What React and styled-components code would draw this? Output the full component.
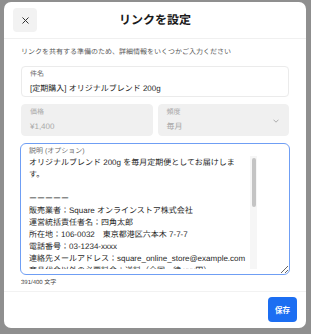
import React from "react";
import styled, { createGlobalStyle } from "styled-components";

const Global = createGlobalStyle`
  html, body { margin: 0; padding: 0; }
  body {
    background: #8f8f8f;
    font-family: "Liberation Sans", "Noto Sans CJK JP", sans-serif;
    text-rendering: geometricPrecision;
    overflow: hidden;
  }
  * { box-sizing: border-box; }
`;

const Page = styled.div`
  width: 311px;
  height: 334px;
  padding: 2px 5px 6px 4px;
  display: flex;
`;

const Modal = styled.div`
  flex: 1;
  background: #fff;
  border-radius: 7px;
  display: flex;
  flex-direction: column;
  overflow: hidden;
`;

const Header = styled.div`
  height: 37px;
  flex: none;
  display: grid;
  grid-template-columns: 24px 1fr 24px;
  align-items: center;
  padding: 0 9px;
  border-bottom: 1px solid #f0f0f0;
`;

const CloseButton = styled.button`
  width: 24px;
  height: 24px;
  border: none;
  border-radius: 4px;
  background: #f2f2f2;
  display: flex;
  align-items: center;
  justify-content: center;
  padding: 0;
`;

const Title = styled.h1`
  margin: 0;
  text-align: center;
  font-size: 12px;
  font-weight: 700;
  color: #1a1a1a;
  line-height: 16px;
`;

const Body = styled.div`
  flex: 1;
  padding: 9px 17px 4px;
  display: flex;
  flex-direction: column;
`;

const Description = styled.p`
  margin: 0;
  font-size: 7px;
  line-height: 10px;
  color: #555;
`;

const Field = styled.div`
  height: ${(p) => p.$h || 31}px;
  border: 1px solid ${(p) => (p.$disabled ? "#f0f0f0" : "#ebebeb")};
  background: ${(p) => (p.$disabled ? "#f0f0f0" : "#fff")};
  border-radius: 4px;
  padding: 3px 8px 0;
  position: relative;
  display: flex;
  flex-direction: column;
`;

const FieldLabel = styled.div`
  font-size: 7px;
  line-height: 10px;
  color: ${(p) => (p.$disabled ? "#a8a8a8" : "#6b6b6b")};
`;

const FieldValue = styled.div`
  margin-top: 3px;
  font-size: 8px;
  line-height: 12px;
  color: ${(p) => (p.$disabled ? "#a8a8a8" : "#1f1f1f")};
`;

const FirstField = styled(Field)`
  margin-top: 8px;
`;

const Row = styled.div`
  margin-top: 7px;
  display: grid;
  grid-template-columns: 1fr 1fr;
  gap: 5px;
`;

const Chevron = styled.svg`
  position: absolute;
  right: 9px;
  top: 14px;
`;

const TextBox = styled.div`
  margin: 7px -1px 0;
  height: 132px;
  border: 1.5px solid #6f9ef4;
  border-radius: 6px;
  padding: 3px 0 0 8px;
  display: flex;
  flex-direction: column;
  resize: vertical;
  overflow: hidden;
`;

const TextRow = styled.div`
  display: flex;
  align-items: flex-start;
  gap: 1px;
`;

const TextArea = styled.textarea`
  flex: none;
  width: 220px;
  height: 112px;
  border: none;
  outline: none;
  resize: none;
  padding: 0 2px 0 0;
  margin: 0;
  font-family: "Liberation Sans", "Noto Sans CJK JP", sans-serif;
  text-rendering: geometricPrecision;
  font-size: 8px;
  line-height: 12px;
  color: #1f1f1f;
  background: transparent;
  overflow: hidden;
`;

const ScrollTrack = styled.div`
  flex: none;
  margin-top: -1px;
  width: 7px;
  height: 113px;
  background: #f6f6f6;
  padding: 2px 1.5px;
`;

const ScrollThumb = styled.div`
  height: 49px;
  border-radius: 2px;
  background: #c4c4c4;
`;

const Counter = styled.div`
  margin-top: 4px;
  font-size: 6px;
  line-height: 8px;
  color: #444;
`;

const Footer = styled.div`
  flex: none;
  border-top: 1px solid #f2f2f2;
  padding: 5px 9px 6px;
  display: flex;
  justify-content: flex-end;
`;

const SaveButton = styled.button`
  width: 29px;
  height: 25px;
  border: none;
  border-radius: 4px;
  background: #1c6ef2;
  color: #fff;
  font-family: "Liberation Sans", "Noto Sans CJK JP", sans-serif;
  font-size: 7.5px;
  font-weight: 700;
  padding: 0;
`;

const text = `オリジナルブレンド 200g を毎月定期便としてお届けします。

ーーーーー
販売業者：Square オンラインストア株式会社
運営統括責任者名：四角太郎
所在地：106-0032　東京都港区六本木 7-7-7
電話番号：03-1234-xxxx
連絡先メールアドレス：square_online_store@example.com
商品代金以外の必要料金：送料（全国一律 xxx円）
お支払方法：クレジットカード
引渡時期：ご注文確認後、3営業日以内に発送
返品・交換：商品到着後 7 日以内にご連絡ください。
不良品の場合は送料当社負担にて交換いたします。
定期便の解約：次回発送日の 5 日前までにご連絡
ください。
ーーーーー
※ 価格は税込です。
※ 内容は予告なく変更となる場合がございます。
※ ご不明点はお気軽にお問い合わせください。
よろしくお願いいたします。`;

export default function App() {
  return (
    <>
      <Global />
      <Page>
        <Modal>
          <Header>
            <CloseButton aria-label="閉じる">
              <svg width="7" height="7" viewBox="0 0 7 7">
                <path d="M0.5 0.5 L6.5 6.5 M6.5 0.5 L0.5 6.5" stroke="#333" strokeWidth="1" />
              </svg>
            </CloseButton>
            <Title>リンクを設定</Title>
            <span />
          </Header>
          <Body>
            <Description>リンクを共有する準備のため、詳細情報をいくつかご入力ください</Description>
            <FirstField>
              <FieldLabel>件名</FieldLabel>
              <FieldValue>[定期購入] オリジナルブレンド 200g</FieldValue>
            </FirstField>
            <Row>
              <Field $disabled $h={32}>
                <FieldLabel $disabled>価格</FieldLabel>
                <FieldValue $disabled>¥1,400</FieldValue>
              </Field>
              <Field $disabled $h={32}>
                <FieldLabel $disabled>頻度</FieldLabel>
                <FieldValue $disabled>毎月</FieldValue>
                <Chevron width="6" height="4" viewBox="0 0 6 4">
                  <path d="M0.5 0.7 L3 3.2 L5.5 0.7" fill="none" stroke="#9a9a9a" strokeWidth="0.8" />
                </Chevron>
              </Field>
            </Row>
            <TextBox>
              <FieldLabel>説明 (オプション)</FieldLabel>
              <TextRow>
                <TextArea defaultValue={text} />
                <ScrollTrack>
                  <ScrollThumb />
                </ScrollTrack>
              </TextRow>
            </TextBox>
            <Counter>391/400 文字</Counter>
          </Body>
          <Footer>
            <SaveButton>保存</SaveButton>
          </Footer>
        </Modal>
      </Page>
    </>
  );
}
